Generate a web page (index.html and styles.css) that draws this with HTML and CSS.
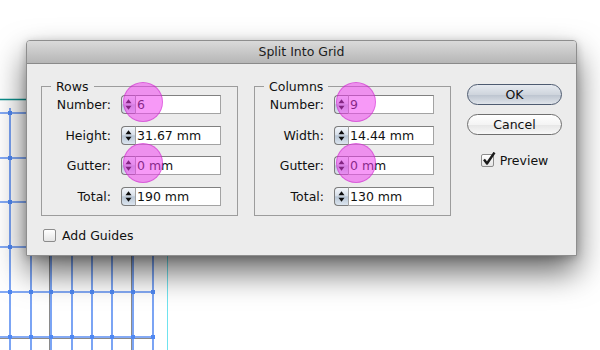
FILE: index.html
```html
<!DOCTYPE html>
<html lang="en">
<head>
    <title>Split Into Grid</title>
    <meta charset="UTF-8">
    <link rel="stylesheet" href="styles.css">
</head>

<body>
    <div class="desk">
        <svg class="canvas" width="600" height="350" viewBox="0 0 600 350">
            <line x1="0" y1="99.5" x2="60" y2="99.5" stroke="#0b8f8c" stroke-width="1.5"/>
            <line x1="167.5" y1="100" x2="167.5" y2="350" stroke="#6fe3ef" stroke-width="1"/>
            <g stroke="#8a8a8a" stroke-width="1">
                <line x1="49.5" y1="110" x2="49.5" y2="350"/>
                <line x1="131.5" y1="110" x2="131.5" y2="350"/>
                <line x1="0" y1="338.5" x2="155" y2="338.5"/>
            </g>
            <g stroke="#5b8ef2" stroke-width="1.6" id="grid"></g>
            <g fill="#4f88f2" id="dots"></g>
        </svg>

        <div class="dialog">
            <div class="titlebar">Split Into Grid</div>

            <div class="body">
                <div class="top">
                    <fieldset class="group">
                        <legend>Rows</legend>
                        <div class="row">
                            <label>Number:</label>
                            <span class="spin"><span class="tap"></span></span>
                            <span class="field">6</span>
                        </div>
                        <div class="row">
                            <label>Height:</label>
                            <span class="spin"></span>
                            <span class="field">31.67 mm</span>
                        </div>
                        <div class="row">
                            <label>Gutter:</label>
                            <span class="spin"><span class="tap"></span></span>
                            <span class="field">0 mm</span>
                        </div>
                        <div class="row">
                            <label>Total:</label>
                            <span class="spin"></span>
                            <span class="field">190 mm</span>
                        </div>
                    </fieldset>

                    <fieldset class="group">
                        <legend>Columns</legend>
                        <div class="row">
                            <label>Number:</label>
                            <span class="spin"><span class="tap"></span></span>
                            <span class="field">9</span>
                        </div>
                        <div class="row">
                            <label>Width:</label>
                            <span class="spin"></span>
                            <span class="field">14.44 mm</span>
                        </div>
                        <div class="row">
                            <label>Gutter:</label>
                            <span class="spin"><span class="tap"></span></span>
                            <span class="field">0 mm</span>
                        </div>
                        <div class="row">
                            <label>Total:</label>
                            <span class="spin"></span>
                            <span class="field">130 mm</span>
                        </div>
                    </fieldset>

                    <div class="actions">
                        <div class="btn btn-default">OK</div>
                        <div class="btn">Cancel</div>
                        <div class="check check-preview">
                            <span class="box">
                                <svg width="16" height="16" viewBox="0 0 16 16"><path d="M3 7.5 L6 11.5 L13.5 0.5" fill="none" stroke="#1a1a1a" stroke-width="2.4" stroke-linejoin="round"/></svg>
                            </span>
                            Preview
                        </div>
                    </div>
                </div>

                <div class="check check-guides">
                    <span class="box"></span>
                    Add Guides
                </div>
            </div>
        </div>
    </div>

    <script>
        var xs = [10, 31, 51, 72, 92, 112, 133, 153];
        var ys = [113, 158, 202, 247, 292, 337];
        var ns = 'http://www.w3.org/2000/svg';
        var grid = document.getElementById('grid');
        var dots = document.getElementById('dots');

        function add(parent, tag, attrs)
        {
            var el = document.createElementNS(ns, tag);
            for (var k in attrs) el.setAttribute(k, attrs[k]);
            parent.appendChild(el);
        }

        xs.forEach(function (x) {
            add(grid, 'line', { x1: x, y1: 108, x2: x, y2: 350 });
        });
        ys.forEach(function (y) {
            add(grid, 'line', { x1: 0, y1: y, x2: 155, y2: y });
            xs.forEach(function (x) {
                add(dots, 'rect', { x: x - 2, y: y - 2, width: 4, height: 4 });
            });
        });

        document.querySelectorAll('.spin').forEach(function (s) {
            s.insertAdjacentHTML('afterbegin',
                '<svg width="13" height="17" viewBox="0 0 13 17"><path d="M3.5 7.3 L6.5 3.3 L9.5 7.3 Z M3.5 9.7 L6.5 13.7 L9.5 9.7 Z" fill="#0d0d0d"/></svg>');
        });
    </script>
</body>
</html>
```

FILE: styles.css
```css
html, body {
    margin: 0;
    background: #fff;
    font-family: "DejaVu Sans", Verdana, sans-serif;
    font-size: 12.5px;
    color: #111;
}

.desk {
    position: relative;
    width: 600px;
    height: 350px;
    overflow: hidden;
}

.canvas {
    position: absolute;
    left: 0;
    top: 0;
}

/* the dialog floats on the layout canvas */
.dialog {
    position: absolute;
    left: 26px;
    top: 40px;
    width: 551px;
    height: 216px;
    box-sizing: border-box;
    background: #ececec;
    border: 1px solid #8e8e8e;
    border-radius: 4px 4px 0 0;
    box-shadow: 0 16px 32px rgba(0, 0, 0, .6), 0 2px 8px rgba(0, 0, 0, .2);
}

.titlebar {
    height: 22px;
    line-height: 21px;
    text-align: center;
    color: #1c1c1c;
    background: linear-gradient(#dadada, #b6b6b6);
    border-bottom: 1px solid #8a8a8a;
    border-radius: 3px 3px 0 0;
}

.body {
    padding: 14.5px 14px 0 14px;
}

.top {
    display: flex;
    align-items: flex-start;
}

.group {
    margin: 0 16px 0 0;
    width: 197px;
    box-sizing: border-box;
    padding: 1.5px 0 9px 9px;
    border: 1px solid #9c9c9c;
    display: flex;
    flex-direction: column;
    gap: 11.5px;
}

.group legend {
    padding: 0 5px;
    line-height: 15px;
}

.row {
    display: flex;
    height: 19px;
    line-height: 19px;
}

.row label {
    width: 60px;
    margin-right: 10px;
    text-align: right;
}

.spin {
    position: relative;
    width: 14px;
    height: 19px;
    box-sizing: border-box;
    border: 1px solid #7c7c7c;
    border-right: none;
    border-radius: 4px 0 0 4px;
    background: linear-gradient(#f3f6fa, #d8e0ea 45%, #b8c6d5 52%, #dce5ef);
}

.spin svg {
    display: block;
}

.field {
    width: 86px;
    height: 19px;
    box-sizing: border-box;
    border: 1px solid #a3a3a3;
    border-top-color: #808080;
    background: #fff;
    padding-left: 1px;
    line-height: 17px;
}

/* click marker */
.tap {
    position: absolute;
    left: 1px;
    top: -14px;
    width: 40px;
    height: 40px;
    box-sizing: border-box;
    border-radius: 50%;
    border: 1px solid rgba(180, 0, 180, .35);
    background: rgba(240, 60, 240, .52);
    z-index: 2;
}

.actions {
    width: 95px;
    margin-top: 5.5px;
    display: flex;
    flex-direction: column;
}

.btn {
    height: 21px;
    box-sizing: border-box;
    border: 1px solid #6f6f6f;
    border-radius: 11px;
    line-height: 19px;
    text-align: center;
    background: linear-gradient(#ffffff, #f4f4f4 50%, #e6e6e6 52%, #f8f8f8);
    margin-bottom: 9px;
}

.btn-default {
    border-color: #4e5b70;
    background: linear-gradient(#e6eaf0, #cfd5dd 50%, #bcc4cf 52%, #dfe4ea);
}

.check {
    display: flex;
    align-items: center;
    gap: 6px;
    line-height: 15px;
}

.check-preview {
    justify-content: center;
    margin-top: 9px;
}

.check-guides {
    margin: 12px 0 0 2px;
}

.box {
    position: relative;
    width: 13px;
    height: 13px;
    box-sizing: border-box;
    border: 1px solid #8c8c8c;
    border-radius: 2px;
    background: linear-gradient(#ffffff, #e4e4e4);
}

.box svg {
    position: absolute;
    left: -1px;
    top: -3px;
}
```
